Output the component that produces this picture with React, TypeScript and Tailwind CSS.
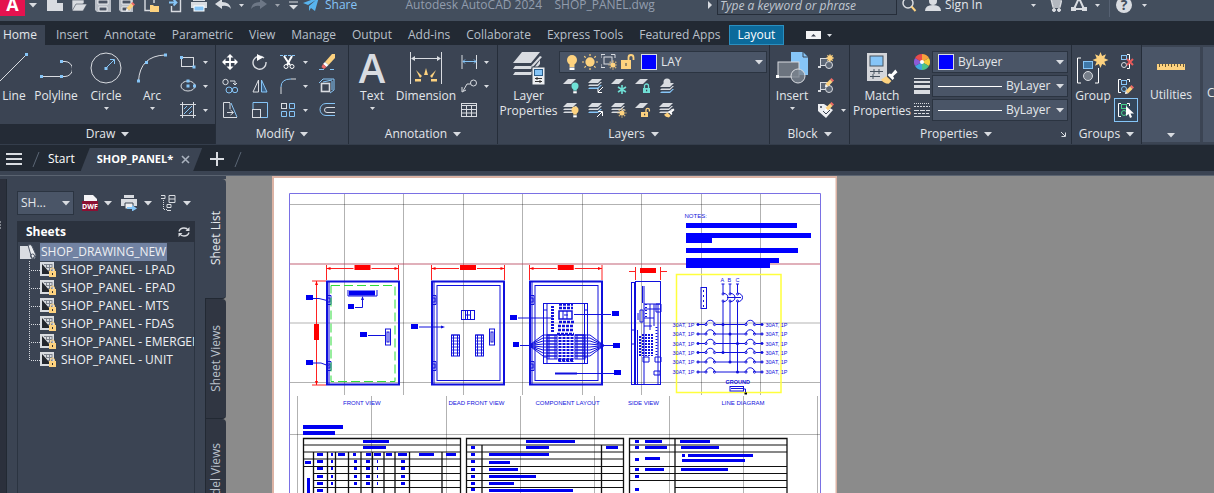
import React from 'react';
import type { ReactNode } from 'react';

const LIGHT = '#d9dce1';
const SKY = '#86c5f7';
const SAND = '#fdd27f';
const TEAL = '#6fe0d6';

function Svg({ w = 16, h = 16, children }: { w?: number; h?: number; children: ReactNode }) {
  return (
    <svg width={w} height={h} viewBox={`0 0 ${w} ${h}`} fill="none" stroke={LIGHT} className="shrink-0" aria-hidden="true">
      {children}
    </svg>
  );
}

function Caret({ big = false }: { big?: boolean }) {
  return big ? (
    <svg width="8" height="5" viewBox="0 0 8 5" className="pointer-events-none shrink-0" aria-hidden="true"><path d="M0 0h8L4 4.6z" fill={LIGHT} /></svg>
  ) : (
    <svg width="5" height="3" viewBox="0 0 5 3" className="shrink-0" aria-hidden="true"><path d="M0 0h5L2.5 3z" fill={LIGHT} /></svg>
  );
}

/* ---------- shared icon pieces ---------- */

const Sheets = ({ x = 0, y = 0, blue = false }: { x?: number; y?: number; blue?: boolean }) => (
  <g transform={`translate(${x} ${y})`} stroke="none">
    <path d="M4 0h10l-4 4H0z" fill={LIGHT} />
    <path d="M1.5 5.5L0 7h10l4-4h-1.5L9.8 5.6z" fill={LIGHT} />
    <path d="M1.5 8.5L0 10h10l4-4h-1.5L9.8 8.6z" fill={blue ? SKY : LIGHT} />
  </g>
);
const OneSheet = () => <path d="M5 1h8L8 6H0z" fill={LIGHT} stroke="none" />;
const Bulb = ({ x, y, r, c }: { x: number; y: number; r: number; c: string }) => (
  <g stroke="none">
    <circle cx={x} cy={y} r={r} fill={c} />
    <rect x={x - r / 2} y={y + r - 1} width={r} height={r * 0.6} fill={c} />
    <rect x={x - r / 2} y={y + r * 1.5} width={r} height={r * 0.6} fill="#fff" />
  </g>
);
const Sun = ({ x, y, r }: { x: number; y: number; r: number }) => (
  <g transform={`translate(${x} ${y})`}>
    <circle r={r * 0.58} fill={SAND} stroke="none" />
    <path d={`M0 ${-r}V${r}M${-r} 0H${r}M${-r * 0.72} ${-r * 0.72}L${r * 0.72} ${r * 0.72}M${r * 0.72} ${-r * 0.72}L${-r * 0.72} ${r * 0.72}`} stroke={SAND} strokeDasharray={`${r * 0.25} ${r * 1.5}`} strokeWidth="1.2" />
  </g>
);
const Pencil = ({ x = 0, y = 0 }: { x?: number; y?: number }) => (
  <g transform={`translate(${x} ${y})`} stroke="none">
    <path d="M6.5 0l2.5 2.5L7.5 4 5 1.5z" fill="#ee6a66" />
    <path d="M5 1.5L7.5 4 3 8.5.5 6z" fill={SAND} />
    <path d="M.5 6L3 8.5 0 9z" fill="#fff" />
  </g>
);
const Lock = ({ x, y, c, open = false }: { x: number; y: number; c: string; open?: boolean }) => (
  <g transform={`translate(${x} ${y})`}>
    <rect y="4" width="7" height="5" fill={c} stroke="none" />
    <path d={open ? 'M5 4V2a1.7 1.7 0 013.4 0v1.5' : 'M1.5 4V2a2 2 0 014 0v2'} stroke={c} strokeWidth="1.3" />
    <rect x="3" y="5.7" width="1.2" height="1.6" fill="#39414f" stroke="none" />
  </g>
);
const Star = ({ x, y, r }: { x: number; y: number; r: number }) => (
  <path transform={`translate(${x} ${y}) scale(${r / 8})`} stroke="none" fill={SAND}
    d="M0-8l1.6 4.1 3.9-1.8-1.7 4L8 0 3.8 1.7l1.7 4-3.9-1.8L0 8l-1.6-4.1-3.9 1.8 1.7-4L-8 0l4.2-1.7-1.7-4 3.9 1.8z" />
);
const Nodes = ({ pts, c = SKY }: { pts: number[][]; c?: string }) => (
  <>{pts.map(([x, y], i) => <rect key={i} x={x - 1.5} y={y - 1.5} width="3" height="3" fill={c} stroke="none" />)}</>
);
const Brush = ({ x, y, s = 1 }: { x: number; y: number; s?: number }) => (
  <g transform={`translate(${x} ${y}) scale(${s})`} stroke="none">
    <path d="M5 6.5L9.5 11 7 13.5Q2 13 0 9.500z" fill={SAND} />
    <path d="M6 5.500L10.500 10l1.500-1.500-1-2L15 3l-2-2.500-3.500 4-2-.5z" fill="#fff" />
  </g>
);

/* ---------- controls ---------- */

function Big({ icon, label, arrow, w }: { icon: ReactNode; label: string; arrow?: boolean; w: string }) {
  return (
    <button type="button" className={`flex shrink-0 flex-col items-center ${w}`}>
      <span className="flex h-9 items-center">{icon}</span>
      <span className="mt-0.5 text-center leading-[15px]">{label}</span>
      {arrow && <span className="mt-1"><Caret /></span>}
    </button>
  );
}

function Small({ icon, name, arrow, on }: { icon: ReactNode; name: string; arrow?: boolean; on?: boolean }) {
  return (
    <button type="button" aria-label={name} className={`flex h-6 items-center gap-[7px] px-1 ${on ? 'bg-[#33465a] outline-1 -outline-offset-1 outline-[#86c5f7]' : ''}`}>
      {icon}
      {arrow && <Caret />}
    </button>
  );
}

function Panel({ title, w, children, dark, launcher }: { title: string; w: string; children: ReactNode; dark?: boolean; launcher?: boolean }) {
  return (
    <section className={`flex shrink-0 flex-col border-r border-[#252d39] ${w}`}>
      <div className="flex flex-1 overflow-hidden pt-[5px]">{children}</div>
      <button type="button" className={`flex h-5 w-full items-center justify-center gap-1.5 ${dark ? 'bg-[#242b36]' : ''}`}>
        <span className={launcher ? 'flex flex-1 items-center justify-center gap-1.5 pl-2' : 'flex items-center gap-1.5'}>
          {title} <Caret big />
        </span>
        {launcher && <Svg w={11} h={8}><path d="M1 2l4 4M5.500 2.500V6.500H1.500" /></Svg>}
      </button>
    </section>
  );
}

function Combo({ label, value, lead }: { label: string; value: string; lead?: ReactNode }) {
  return (
    <label className="flex h-[22px] items-center gap-1 border border-[#2b3441] bg-[#4a5567] pr-[3px] pl-[5px]">
      {lead}
      <select aria-label={label} className="min-w-0 flex-1 appearance-none bg-transparent text-xs outline-none"><option>{value}</option></select>
      <Caret big />
    </label>
  );
}

const Swatch = () => <span className="size-4 shrink-0 border border-[#d9dce1] bg-[#0000ff]" />;

/* ---------- title bar ---------- */

function TitleBar() {
  const cell = 'flex w-6 shrink-0 justify-center';
  const arrow = 'flex w-3 shrink-0 justify-center';
  return (
    <header className="flex h-[21px] items-end overflow-hidden bg-[#434e5d]">
      <div className="flex h-8 w-full shrink-0 items-center">
        <button type="button" aria-label="Application menu" className="flex h-[27px] w-[25px] shrink-0 items-end justify-center self-start bg-[#e4124f] pb-0.5">
          <span className="text-lg leading-5 font-bold text-white">A</span>
        </button>
        <span className="flex w-[18px] shrink-0 pl-1"><Caret big /></span>
        <button type="button" aria-label="New" className={cell}><Svg><path d="M0 0h10v6h6v8H0z" fill={LIGHT} stroke="none" /></Svg></button>
        <button type="button" aria-label="Open" className={cell}><Svg><path d="M1 13V3h12v3M1 14L5 7h11l-4 7z" fill={LIGHT} stroke="#434e5d" strokeWidth=".6" /></Svg></button>
        <button type="button" aria-label="Save" className={cell}><Svg><path d="M0 0h16v15H2l-2-2z" fill="#b9bec6" stroke="none" /><path d="M3 3h10v4H3zM4 10h8v4H4z" fill="#4a5363" stroke="#eceef1" /></Svg></button>
        <button type="button" aria-label="Save as" className={cell}><Svg><path d="M0 0h14v15H2l-2-2z" fill="#b9bec6" stroke="none" /><path d="M3 3h9v4H3zM3 10h8v4H3z" fill="#4a5363" stroke="#eceef1" /><Pencil x={7} y={5} /></Svg></button>
        <button type="button" aria-label="Open from web" className={cell}><Svg><path d="M2 0v13.500h6M2 .5h9V6" strokeWidth="1.4" /><path d="M7 8h3l1 1h5v6H7z" fill={SAND} stroke="none" /></Svg></button>
        <button type="button" aria-label="Save to web" className={cell}><Svg><path d="M4.500 9v5.500h9V0" strokeWidth="1.4" /><path d="M2 5.500h7M6.500 2.500l3 3-3 3" stroke={SKY} strokeWidth="1.8" /></Svg></button>
        <button type="button" aria-label="Plot" className={cell}><Svg><path d="M2 0h12v4H2zM0 5h16v6H0z" fill={LIGHT} stroke="none" /><rect x="3" y="9" width="10" height="5" fill={SKY} stroke="#fff" /></Svg></button>
        <button type="button" aria-label="Undo" className={cell}><Svg><path d="M0 7l7-5v3q8 0 9 7-3-4-9-3v3z" fill={LIGHT} stroke="none" /></Svg></button>
        <span className={arrow}><Caret /></span>
        <button type="button" aria-label="Redo" className={cell}><Svg><path d="M16 7L9 2v3q-8 0-9 7 3-4 9-3v3z" fill="#6d7786" stroke="none" /></Svg></button>
        <span className={`${arrow} opacity-60`}><Caret /></span>
        <button type="button" aria-label="Customize" className="flex w-5 shrink-0 justify-center"><Svg w={9} h={10}><path d="M0 2h9" /><path d="M0 5h9L4.500 9.500z" fill={LIGHT} stroke="none" /></Svg></button>
        <button type="button" className="flex shrink-0 items-center gap-1.5 text-[#86c5f7]">
          <Svg><path d="M0 6L16 0 12 14 8 11 6 14V9l7-6-8 5z" fill="#58b4ee" stroke="none" /></Svg>Share
        </button>
        <p className="flex-1 text-center whitespace-pre text-[#929dad]">Autodesk AutoCAD 2024    SHOP_PANEL.dwg</p>
        <span className="flex w-3.5 shrink-0 justify-center"><svg width="4" height="8" viewBox="0 0 4 8" aria-hidden="true"><path d="M0 0l4 4-4 4z" fill={LIGHT} /></svg></span>
        <input aria-label="Search" placeholder="Type a keyword or phrase" className="h-5 w-[180px] shrink-0 border border-[#262e3a] bg-[#434e5d] px-0.5 italic outline-none placeholder:text-[#c0c7d0]" />
        <button type="button" aria-label="Find" className={cell}><Svg><circle cx="7" cy="6" r="5" strokeWidth="1.500" /><path d="M10.500 9.500l4 4.500" stroke={SAND} strokeWidth="2" /></Svg></button>
        <button type="button" className="flex w-[106px] shrink-0 items-center gap-1 pl-1">
          <Svg><path d="M0 14q0-6 8-6t8 6z" fill={LIGHT} stroke="none" /><circle cx="8" cy="4" r="4" fill={LIGHT} stroke="none" /></Svg>Sign In
        </button>
        <span className={arrow}><Caret /></span>
        <button type="button" aria-label="Store" className="ml-1 flex w-6 shrink-0 justify-center"><Svg w={14} h={14}><path d="M0 1h3l2 8h7l1.500-6H4M4 5h9M5 7h7" strokeWidth="1.300" /><circle cx="6" cy="12" r="1.500" fill={LIGHT} /><circle cx="11" cy="12" r="1.500" fill={LIGHT} /></Svg></button>
        <button type="button" aria-label="Autodesk apps" className={cell}><Svg><path d="M8 1L3 12M8 1l5 11M3 12h9" strokeWidth="2" /><path d="M0 10h5v4H0zM11 10h5v4h-5z" fill={LIGHT} stroke="none" /></Svg></button>
        <span className={arrow}><Caret /></span>
        <span className="mx-1.5 h-6 w-px shrink-0 bg-[#566172]" />
        <button type="button" aria-label="Help" className="flex size-4 shrink-0 items-center justify-center rounded-full bg-[#d9dce1] text-sm leading-4 font-bold text-[#434e5d]">?</button>
        <span className="flex w-[82px] shrink-0 pl-2.5"><Caret /></span>
      </div>
    </header>
  );
}

/* ---------- ribbon ---------- */

const TABS = ['Insert', 'Annotate', 'Parametric', 'View', 'Manage', 'Output', 'Add-ins', 'Collaborate', 'Express Tools', 'Featured Apps'];

function RibbonTabs() {
  return (
    <nav className="flex h-6 items-end bg-[#222933] text-[#b9c0ca]">
      <button type="button" className="mr-[3px] flex h-5 shrink-0 items-center bg-[#3b4453] pr-2 pl-[3px] text-[#e4e7eb]">Home</button>
      {TABS.map((t) => <button type="button" key={t} className="h-5 shrink-0 px-2">{t}</button>)}
      <button type="button" className="h-5 shrink-0 border border-[#2a8fc0] bg-[#0c6a9b] px-2 text-white">Layout</button>
      <button type="button" aria-label="Minimize ribbon" className="ml-[22px] flex h-5 items-center gap-1.5">
        <Svg w={15} h={8}><rect width="15" height="8" fill="#f2f3f5" stroke="none" /><path d="M5 5.500h5L7.500 3z" fill="#39414f" stroke="none" /></Svg>
        <Caret />
      </button>
    </nav>
  );
}

function DrawPanel() {
  return (
    <Panel title="Draw" w="w-[216px]" dark>
      <Big w="w-7" label="Line" icon={<Svg w={28} h={32}><path d="M0 29L26 3" /><Nodes pts={[[26.5, 2.5]]} /></Svg>} />
      <Big w="w-[56px]" label="Polyline" icon={<Svg w={32} h={32}><path d="M2 24.500H21.500M22 9.500h3a7.500 7.500 0 010 15h-3" /><Nodes pts={[[1.5, 24.5], [21.5, 9.5], [21.5, 24.5]]} /></Svg>} />
      <Big w="w-11" arrow label="Circle" icon={<Svg w={32} h={32}><circle cx="16" cy="16" r="15" /><path d="M17 15l7-7M20 7.500h4.500V12" stroke={SKY} /><Nodes pts={[[16, 16.5]]} /></Svg>} />
      <Big w="w-12" arrow label="Arc" icon={<Svg w={32} h={32}><path d="M2.500 29Q4 4 29 3" /><Nodes pts={[[2.5, 29], [10.5, 10.5], [29.5, 3]]} /></Svg>} />
      <div className="flex flex-col">
        <Small name="Rectangle" arrow icon={<Svg><rect x="1.500" y="3.500" width="12" height="9" /><Nodes pts={[[1.5, 3.5], [14, 13]]} /></Svg>} />
        <Small name="Ellipse" arrow icon={<Svg><ellipse cx="8" cy="8" rx="7" ry="5" /><Nodes pts={[[8, 3], [8, 8], [14.5, 8]]} /></Svg>} />
        <Small name="Hatch" arrow icon={<Svg><path d="M0 2.500h16M0 13.500h16M2.500 0v16M13.500 0v16" /><path d="M4 7l3-3M4 12l8-8M9 12l3-3" stroke={SKY} /></Svg>} />
      </div>
    </Panel>
  );
}

function ModifyPanel() {
  const col = 'flex flex-col';
  return (
    <Panel title="Modify" w="w-[133px]">
      <div className={`${col} pl-0.5`}>
        <Small name="Move" icon={<Svg><path d="M8 2v12M2 8h12" stroke="#fff" strokeWidth="1.800" /><path d="M8 0l3.500 3.500h-7zM8 16l3.500-3.500h-7zM0 8l3.500-3.500v7zM16 8l-3.500-3.500v7z" fill="#fff" stroke="none" /></Svg>} />
        <Small name="Copy" icon={<Svg><circle cx="3.500" cy="4" r="2.700" /><path d="M8 3h5v4M11 5l2 2 2-2" /><circle cx="7" cy="12" r="3" stroke={SKY} /><circle cx="13" cy="12" r="2.700" stroke={SKY} /></Svg>} />
        <Small name="Stretch" icon={<Svg><path d="M8 .5H1.500v15H6M8 1v6M6 15.500h9M5 10.500h6M8.500 8l3 2.500-3 2.500" /><path d="M9 1l6 14" stroke={SKY} /></Svg>} />
      </div>
      <div className={`${col} pl-1.5`}>
        <Small name="Rotate" icon={<Svg><path d="M12 4a6.500 6.500 0 10 2 4" strokeWidth="1.400" /><path d="M5 0l6 3.500L5 7z" fill="#fff" stroke="none" /></Svg>} />
        <Small name="Mirror" icon={<Svg><path d="M6.500 2v12H1z" /><path d="M9.500 2v12H15z" stroke={SKY} fill="#3c6288" /></Svg>} />
        <Small name="Scale" icon={<Svg><path d="M1 7V.5h14.500v15H9" stroke={SKY} /><rect x=".5" y="7.500" width="8" height="8" /></Svg>} />
      </div>
      <div className={`${col} pl-1`}>
        <Small name="Trim" arrow icon={<Svg><path d="M0 1.500h16" stroke={SKY} strokeDasharray="3 1" /><path d="M4 2l6 9M12 2L7 11" stroke="#fff" strokeWidth="2" /><circle cx="6" cy="12.500" r="2" stroke="#fff" /><circle cx="12" cy="12.500" r="2" stroke="#fff" /></Svg>} />
        <Small name="Fillet" arrow icon={<Svg><path d="M1 9v7M11 1h5" /><path d="M1 9Q1 1 11 1" stroke={SKY} /></Svg>} />
        <Small name="Array" arrow icon={<Svg><rect x="1.500" y="1.500" width="5" height="5" /><path d="M9.500 1.500h5v5h-5zM1.500 9.500h5v5h-5zM9.500 9.500h5v5h-5z" stroke={SKY} /></Svg>} />
      </div>
      <div className={`${col} pl-[3px]`}>
        <Small name="Erase" icon={<Svg><path d="M0 15.500h5M11 15.500h4" stroke={SKY} /><path d="M16 0v4L9.500 11 6 8l7-8z" fill={SAND} stroke="none" /><path d="M6 8l3.500 3-2 2L4 10z" fill="#fff" stroke="none" /><path d="M4 10l3.500 3L5 15l-2.500-2z" fill="#ee6a66" stroke="none" /></Svg>} />
        <Small name="Explode" icon={<Svg><rect x="2.500" y="5.500" width="8" height="8" strokeWidth="1.600" /><path d="M0 5l4-4h11v11l-4 3M4 4l9-2M13 3v9" stroke={SKY} /></Svg>} />
        <Small name="Offset" icon={<Svg><path d="M16 1.500H7a6 6 0 000 12h9" stroke={SKY} /><path d="M16 5.500H8a2.500 2.500 0 000 5h8" /></Svg>} />
      </div>
    </Panel>
  );
}

function AnnotationPanel() {
  return (
    <Panel title="Annotation" w="w-[149px]">
      <Big w="w-[46px]" arrow label="Text" icon={<span className="text-[40px] leading-9 font-semibold text-[#d9dce1]">A</span>} />
      <Big w="w-[62px]" label="Dimension" icon={<Svg w={32} h={34}><path d="M.5 1v32M31.500 1v32M2 7.500h28" /><path d="M1 7.500l4-2.500v5zM31 7.500L27 5v5z" fill={LIGHT} stroke="none" /><path d="M16 17l2 7h-4zM6 19l6 6-2 2zM26 19l-6 6 2 2zM5 28h6v2.500H5zM21 28h6v2.500h-6z" fill={SAND} stroke="none" /></Svg>} />
      <div className="flex flex-col">
        <Small name="Linear" arrow icon={<Svg><path d="M1 1v14M15.500 1v14" /><path d="M2 7.500h13M4 5.500l-2 2 2 2M13 5.500l2 2-2 2" stroke={SKY} /></Svg>} />
        <Small name="Leader" arrow icon={<Svg><circle cx="12.500" cy="5" r="3" /><path d="M9.500 6H6l-4 7M1 9v5l4-2" /></Svg>} />
        <Small name="Table" icon={<Svg><rect x=".5" y="1.500" width="15" height="13" /><path d="M0 3.500h16M0 7.500h16M0 11h16M5.500 4v10M10.500 4v10" /></Svg>} />
      </div>
    </Panel>
  );
}

function LayersPanel() {
  return (
    <Panel title="Layers" w="w-[272px]">
      <Big w="w-[61px]" label="Layer Properties" icon={
        <Svg w={34} h={34}>
          <path d="M10 1h18L19 12H1zM3 15l-2 3h18L30 6l-2-1-9 10zM3 21l-2 3h18l9-11V9l-9 12z" fill={LIGHT} stroke="none" />
          <rect x="20" y="16" width="13" height="18" fill="#eceef1" stroke="#3b4453" /><rect x="22.500" y="18.500" width="8" height="6" fill={SKY} stroke="#2b5f8c" /><path d="M23 27.500h7M23 30.500h7M25 26v3M28 29v3" stroke="#333" />
        </Svg>} />
      <div className="flex flex-1 flex-col pr-0.5">
        <div className="flex h-6 flex-col justify-center">
          <Combo label="Layer" value="LAY" lead={
            <span className="flex items-center gap-[3px]">
              <Svg w={14} h={16}><Bulb x={7} y={6} r={5} c={SAND} /></Svg>
              <Svg><Sun x={8} y={8} r={8} /></Svg>
              <Svg><path d="M0 4V.5h4M10 .5h4V4M0 10v3.500h4" /><rect x="3" y="3" width="8" height="7" /><Sun x={12} y={11} r={4.5} /></Svg>
              <Svg><rect x="1" y="6" width="10" height="9" fill={SAND} stroke="none" /><path d="M8.500 6V3.500a2.500 2.500 0 015 0V6" stroke={SAND} strokeWidth="1.800" /><path d="M6 9v3" stroke="#39414f" /></Svg>
              <span className="flex pl-0.5"><Swatch /></span>
            </span>} />
        </div>
        <div className="flex">
          <Small name="Layer off" icon={<Svg><OneSheet /><Bulb x={12} y={8} r={3.5} c={TEAL} /></Svg>} />
          <Small name="Isolate" icon={<Svg><Sheets x={1} y={1} blue /><path d="M16 9l-5 5M11 10.500V14.500h4" stroke="#fff" /></Svg>} />
          <Small name="Freeze" icon={<Svg><OneSheet /><path d="M11 7v9M7 9l8 5M15 9l-8 5" stroke={TEAL} strokeWidth="1.600" /></Svg>} />
          <Small name="Lock layer" icon={<Svg><OneSheet /><Lock x={8} y={6} c={TEAL} /></Svg>} />
          <Small name="Make current" icon={<Svg><Sheets x={1} y={5} blue /><circle cx="8" cy="4" r="3.500" fill={LIGHT} stroke="none" /></Svg>} />
        </div>
        <div className="flex">
          <Small name="Turn all on" icon={<Svg><Sheets y={1} /><Bulb x={12} y={8} r={3.5} c={SAND} /></Svg>} />
          <Small name="Unisolate" icon={<Svg><Sheets x={1} y={1} blue /><path d="M10 15l5-5M11 9.500h4.500V14" stroke="#fff" /></Svg>} />
          <Small name="Thaw all" icon={<Svg><Sheets y={1} /><Sun x={11} y={11} r={4.5} /></Svg>} />
          <Small name="Unlock layer" icon={<Svg><OneSheet /><Lock x={6} y={6} c={SAND} open /></Svg>} />
          <Small name="Match layer" icon={<Svg><Sheets y={1} /><Brush x={5} y={6} s={0.7} /></Svg>} />
        </div>
      </div>
    </Panel>
  );
}

function BlockPanel() {
  const blk = <><rect x="2.500" y="4.500" width="9" height="7" fill="#5c6675" /><circle cx="11" cy="11" r="3.500" fill="#5c6675" /><path d="M0 12h3v2H0z" fill={LIGHT} stroke="none" /></>;
  return (
    <Panel title="Block" w="w-20">
      <Big w="w-[44px]" arrow label="Insert" icon={
        <Svg w={33} h={34}><path d="M15 1h12l5 5v18H15z" fill={SKY} stroke="none" /><path d="M27 1v5h5" stroke="#3b4453" /><rect x="2" y="11" width="21" height="15" fill="#6c747f" /><circle cx="22" cy="25" r="7" fill="#7b838e" fillOpacity=".8" /><path d="M0 24h3v3H0z" fill="#fff" stroke="none" /></Svg>} />
      <div className="flex flex-col">
        <Small name="Create block" icon={<Svg>{blk}<Star x={12} y={4} r={4.5} /></Svg>} />
        <Small name="Edit block" icon={<Svg>{blk}<Pencil x={7} y={0} /></Svg>} />
        <Small name="Edit attributes" arrow icon={<Svg><path d="M0 2h6l9 6-7 8L0 9z" fill="#eceef1" stroke="none" /><circle cx="3" cy="5" r="1" fill="#39414f" stroke="none" /><path d="M5 9l3 3 4-4" stroke="#39414f" /><Pencil x={7} y={0} /></Svg>} />
      </div>
    </Panel>
  );
}

function PropertiesPanel() {
  const rule = <span className="h-px w-16 shrink-0 bg-white" />;
  const wheel = ['#f7a13c', '#f4d03f', '#4cc38a', '#3fa7e0', '#8d5bd6', '#e94b4b'];
  const row = 'flex h-6 items-center gap-0.5';
  return (
    <Panel title="Properties" w="w-[222px]" launcher>
      <Big w="w-[64px]" label="Match Properties" icon={
        <Svg w={32} h={34}><rect x="1" y="2" width="20" height="28" fill="#d4d6da" stroke="none" /><rect x="4" y="5" width="13" height="10" fill={SKY} stroke="#46525f" /><path d="M4 20.500h13M4 25.500h10M8 18v5M13 18v5M7 23v5" stroke="#46525f" /><Brush x={15} y={18} s={1.1} /></Svg>} />
      <div className="flex min-w-0 flex-1 flex-col pr-[3px]">
        <div className={row}>
          <Svg>{wheel.map((c, i) => <path key={c} d="M8 8L8 0A8 8 0 0114.930 4z" fill={c} stroke="none" transform={`rotate(${i * 60} 8 8)`} />)}<circle cx="8" cy="8" r="2" fill="#fff" stroke="none" /></Svg>
          <div className="min-w-0 flex-1"><Combo label="Object color" value="ByLayer" lead={<Swatch />} /></div>
        </div>
        <div className={row}>
          <Svg><path d="M0 .5h16" /><path d="M0 4h16" strokeWidth="2" /><path d="M0 8.500h16" strokeWidth="3" /><path d="M0 14h16" strokeWidth="4" /></Svg>
          <div className="min-w-0 flex-1"><Combo label="Lineweight" value="ByLayer" lead={rule} /></div>
        </div>
        <div className={row}>
          <Svg><path d="M0 1.500h16" strokeDasharray="1 1" /><path d="M0 4.500h16" strokeDasharray="2 1" /><path d="M0 8.500h16" strokeDasharray="5 1" /><path d="M0 11.500h16" strokeDasharray="3 1" /><path d="M0 14.500h16" /></Svg>
          <div className="min-w-0 flex-1"><Combo label="Linetype" value="ByLayer" lead={rule} /></div>
        </div>
      </div>
    </Panel>
  );
}

function GroupsPanel() {
  const grp = (c: string) => <><path d="M3 1.500H.5v13H3M9 1.500h2.500V4" stroke="#fff" /><rect x="3.500" y="2.500" width="5" height="4" stroke={c} /><circle cx="6" cy="11" r="2.500" stroke={c} /></>;
  return (
    <Panel title="Groups" w="w-[70px]">
      <Big w="w-[42px]" label="Group" icon={
        <Svg w={32} h={34}><path d="M4 7H.5v25H4M18 32h3.500V17" stroke="#fff" /><rect x="6.500" y="10.500" width="9" height="7" fill="#3f78a8" stroke={SKY} /><circle cx="11" cy="25" r="4.500" fill="#767e89" /><Star x={23.5} y={9} r={8} /></Svg>} />
      <div className="flex flex-col">
        <Small name="Ungroup" icon={<Svg><rect x="3.500" y="1.500" width="5" height="4" stroke={SKY} /><circle cx="6" cy="11" r="2.500" /><path d="M9 .5h2.500v14H9" stroke="#fff" /><path d="M9 5l6 6M15 5l-6 6" stroke="#e85a5a" strokeWidth="2" /></Svg>} />
        <Small name="Group edit" icon={<Svg>{grp(SKY)}<Pencil x={7} y={7} /></Svg>} />
        <Small name="Group selection" on icon={<Svg>{grp('#45d08a')}<path d="M8 4v10l2.500-2 1.500 4 2-1-1.500-3.500H16z" fill="#fff" stroke="none" /></Svg>} />
      </div>
    </Panel>
  );
}

function Ribbon() {
  const tall = 'mt-0.5 mb-0.5 flex shrink-0 flex-col items-center bg-[#4a5567] pb-1';
  return (
    <div className="flex h-[99px] overflow-hidden bg-[#3b4453] text-[#e4e7eb]">
      <DrawPanel />
      <ModifyPanel />
      <AnnotationPanel />
      <LayersPanel />
      <BlockPanel />
      <PropertiesPanel />
      <GroupsPanel />
      <button type="button" className={`${tall} w-[58px]`}>
        <Svg w={28} h={34}><path d="M0 17h28v6H0z" fill={SAND} stroke="none" /><path d="M2.500 17v3M5.500 17v2M8.500 17v3M11.500 17v2M14.500 17v3M17.500 17v2M20.500 17v3M23.500 17v2M26.500 17v3" stroke="#6b5a35" /></Svg>
        <span className="mt-1.5">Utilities</span>
        <span className="mt-auto"><Caret big /></span>
      </button>
      <button type="button" className="mt-0.5 mb-0.5 ml-[3px] flex flex-1 items-start bg-[#4a5567] pt-[38px] pl-1">C</button>
    </div>
  );
}

/* ---------- document tabs ---------- */

function DocTabs() {
  const slash = <Svg w={8} h={16}><path d="M1 16L7 1" stroke="#5b6675" /></Svg>;
  return (
    <nav className="mt-px flex h-[30px] items-center border-b-4 border-[#3b4453] bg-[#222933] pt-0.5 text-[11px] text-white">
      <button type="button" aria-label="Menu" className="ml-1.5 shrink-0"><Svg><path d="M0 3h16M0 8h16M0 13h16" strokeWidth="2" /></Svg></button>
      <span className="ml-2.5">{slash}</span>
      <button type="button" className="ml-2 shrink-0 text-xs">Start</button>
      <div className="ml-1.5 flex h-[23px] shrink-0 items-center gap-2 self-end bg-[#3b4453] pr-2 pl-4 [clip-path:polygon(9px_0,100%_0,calc(100%-9px)_100%,0_100%)]">
        <button type="button" className="font-bold">SHOP_PANEL*</button>
        <button type="button" aria-label="Close" className="pr-1"><Svg w={9} h={9}><path d="M1 1l7 7M8 1L1 8" stroke="#a9b1bd" strokeWidth="1.600" /></Svg></button>
      </div>
      <button type="button" aria-label="New tab" className="ml-2 shrink-0"><Svg w={14} h={14}><path d="M7 0v14M0 7h14" strokeWidth="2" /></Svg></button>
      <span className="ml-2.5">{slash}</span>
    </nav>
  );
}

/* ---------- sheet set palette ---------- */

const SHEETS = ['LPAD', 'EPAD', 'MTS', 'FDAS', 'EMERGEN', 'UNIT'];

function SheetSet() {
  return (
    <aside className="flex shrink-0">
      <div className="flex w-[7px] shrink-0 border-r border-[#222933] bg-[#2b303c] pt-[42px]">
        <Svg w={2} h={9}><path d="M0 1h1M0 4h1M0 7h1" /></Svg>
      </div>
      <div className="w-[198px] shrink-0 bg-[#3b4453] pt-3 pr-2.5 pl-2.5">
        <div className="flex items-center">
          <label className="mr-2 flex h-6 w-[57px] items-center gap-1 border border-[#2b3441] bg-[#4a5567] pr-[3px] pl-[3px] text-[#e4e7eb]">
            <select aria-label="Sheet set" className="w-full min-w-0 appearance-none bg-transparent text-xs outline-none"><option>SH...</option></select>
            <Caret big />
          </label>
          <button type="button" aria-label="Publish to DWF" className="flex w-[39px] items-center gap-1.5"><Svg><path d="M2 0h9l4 4v4H2z" fill="#f4f4f6" stroke="none" /><path d="M0 6h16v10H0z" fill="#8c1033" stroke="none" /><text x="8" y="14" textAnchor="middle" fontSize="7" fontWeight="700" fill="#fff" stroke="none">DWF</text></Svg><Caret big /></button>
          <button type="button" aria-label="Publish" className="flex w-[40px] items-center gap-1.5"><Svg w={17} h={16}><path d="M3 0h10v3H3zM0 4h16v7H0z" fill={LIGHT} stroke="none" /><path d="M4 8h8v6H4z" fill="#eceef1" stroke="#3b4453" /><path d="M6 12h5v-2l5 3.500-5 3V14H6z" fill={SKY} stroke="none" /></Svg><Caret big /></button>
          <button type="button" aria-label="Sheet selections" className="flex items-center gap-1.5"><Svg><path d="M2.500 3v12M3 14.500h3" strokeDasharray="1 1" /><path d="M0 .5h4v3H0M8 .5h6v7H8zM6 9.500h4v3H6zM8 4h6M6 15.500h4" /></Svg><Caret big /></button>
        </div>
        <div className="mt-1.5 flex h-[21px] items-center justify-between bg-[#2b323e] pr-[5px] pl-[9px]">
          <h2 className="text-xs font-bold text-white">Sheets</h2>
          <button type="button" aria-label="Refresh"><Svg w={12} h={10}><path d="M1 4.500Q2 1 6 1q3 0 4 2M11 5.500Q10 9 6 9 3 9 2 7" strokeWidth="1.300" /><path d="M11.500 0v4h-4zM.500 10V6h4z" fill={LIGHT} stroke="none" /></Svg></button>
        </div>
        <div className="h-full overflow-hidden border-x border-[#2b3441] text-xs whitespace-nowrap text-[#eef0f3]">
          <div className="flex h-[19px] items-end gap-[3px] pl-0.5">
            <Svg w={17} h={17}><path d="M0 2h9l6 13H0z" fill={LIGHT} stroke="none" /><path d="M8 1q3-1 4 1l4 9q0 4-4 4z" fill="#eceef1" stroke="#4a5363" /><circle cx="12.500" cy="12" r="2" stroke="#4a5363" /></Svg>
            <button type="button" className="h-[18px] bg-[#7283a3] px-px">SHOP_DRAWING_NEW</button>
          </div>
          <ul>
            {SHEETS.map((s) => (
              <li key={s} className="flex h-[18px] items-center pl-[11px]">
                <Svg w={11} h={18}><path d={s === 'UNIT' ? 'M.5 0v9' : 'M.5 0v18'} strokeDasharray="1 1" /><path d="M2 9.500h9" strokeDasharray="1 1" /></Svg>
                <Svg><rect width="14" height="14" fill={LIGHT} stroke="none" /><path d="M2 2v10h9z" fill="#23272e" stroke="none" /><path d="M4 2.500h8M6 5.500h6M8 8.500h4M6.500 2v4M9.500 2v7M12 2v9" stroke="#7c828c" /><rect x="9" y="9" width="7" height="6" fill={SAND} stroke="none" /><path d="M10.500 9.500V8a2 2 0 014 0v1.500" stroke={SAND} /><path d="M12.500 11v2" stroke="#333" /></Svg>
                <span className="pl-[5px]">SHOP_PANEL - {s}</span>
              </li>
            ))}
          </ul>
        </div>
      </div>
      <div className="flex w-[21px] shrink-0 flex-col overflow-hidden">
        {['Sheet List', 'Sheet Views', 'Model Views'].map((t, i) => (
          <button type="button" key={t} className={`flex h-[120px] shrink-0 items-center justify-center rounded-r-sm border-b border-[#222933] text-xs ${i ? 'border-l bg-[#303642] text-[#b9c0ca]' : 'bg-[#3b4453] text-[#e4e7eb]'}`}>
            <span className="rotate-180 leading-4 [writing-mode:vertical-rl]">{t}</span>
          </button>
        ))}
      </div>
    </aside>
  );
}

/* ---------- drawing sheet ---------- */

const INK = '#1010dc';

const Bars = ({ at, h = 3, c = '#0000f0' }: { at: number[][]; h?: number; c?: string }) => (
  <g fill={c} stroke="none">{at.map(([x1, x2, y, hh], i) => <rect key={i} x={x1} y={y} width={x2 - x1} height={hh ?? h} />)}</g>
);

function TopDim({ x1, x2 }: { x1: number; x2: number }) {
  const m = (x1 + x2) / 2;
  return (
    <g stroke="#f22" fill="#f00">
      <path d={`M${x1} 265v15M${x2} 265v15M${x1} 268.500H${m - 9}M${m + 9} 268.500H${x2}`} />
      <path d={`M${x1} 268.500l4-1.500v3zM${x2} 268.500l-4-1.500v3z`} stroke="none" />
      <rect x={m - 8} y="265" width="16" height="5" stroke="none" />
    </g>
  );
}

function Enclosure({ x, inner }: { x: number; inner: boolean }) {
  return (
    <g>
      <rect x={x} y="281.500" width="72" height="103" strokeWidth="2" />
      {inner && <rect x={x + 5} y="285.500" width="63" height="95" />}
      <path d={`M${x + 2} 282v102M${x} 295.500h4v9h-4M${x + 1} 298h2v4h-2M${x} 361.500h4v9h-4M${x + 1} 364h2v4h-2`} />
    </g>
  );
}

function Breakers({ x, y, n, w }: { x: number; y: number; n: number; w: number }) {
  return (
    <g>
      <rect x={x} y={y} width={w} height={n * 3} />
      <path d={`M${x + 2} ${y}v${n * 3}M${x + w - 2} ${y}v${n * 3}`} />
      {Array.from({ length: n }, (_, i) => <path key={i} d={`M${x} ${y + i * 3}h${w}`} strokeWidth=".8" />)}
    </g>
  );
}

const ROWS = [324.5, 334, 343.5, 352.5, 362, 372];
const FAN = [335, 338, 341, 344, 347, 350, 353, 356];

function Drawing() {
  const t1 = [313.5, 327.5, 335.5, 348.5, 361, 372.5, 384, 395, 409.5, 442];
  const lines = [445, 452, 459, 466.5, 473.5, 480.5, 487.5];
  return (
    <svg width="565" height="317" viewBox="272 176 565 317" fill="none" stroke={INK} className="block bg-white" fontFamily="'Liberation Sans', sans-serif" role="img" aria-label="Panel shop drawing">
      <path d="M273 493V177H836.500V493" stroke="#dcb3a4" strokeWidth="2" />
      <g stroke="#000" strokeOpacity=".38" strokeWidth=".8">
        {[344.5, 403.5, 463.5, 522.5, 582.5, 641.5, 701.5, 760.5].map((x) => <path key={x} d={`M${x} 194V395`} />)}
        {[297.5, 371.5, 446.5, 520.5, 594.5, 669.5, 743.5, 817.5].map((x) => <path key={x} d={`M${x} 396V493`} />)}
        {[204.5, 323, 382.5, 434.5].map((y) => <path key={y} d={`M289 ${y}H820`} />)}
      </g>
      <path d="M289 264H820" stroke="#b33a52" strokeOpacity=".8" />
      <path d="M289.500 493V193.500H820.500V493" stroke="#7a70e4" />

      <Bars h={5} c="#0000ff" at={[[686, 797, 223], [686, 811, 233], [686, 712, 238], [686, 798, 248], [686, 779, 258], [686, 770, 263]]} />
      <TopDim x1={326.5} x2={398.5} />
      <TopDim x1={431.5} x2={504.5} />
      <TopDim x1={529.5} x2={602} />
      <g stroke="#f22"><path d="M316.500 281V385M312 281h14M312 385h14M635.500 267v13M660.500 267v13M629 271.500h7M660 271.500h7" /><path d="M314 324h5v16h-5zM640 268h16v5h-16zM315 285l1.500-4 1.500 4zM315 381l1.500 4 1.500-4z" fill="#f00" stroke="none" /></g>

      <g id="front">
        <Enclosure x={327} inner={false} />
        <rect x="331" y="285.500" width="64" height="96" stroke="#2fdc3c" strokeDasharray="9 4" />
        <path d="M348 290v6h29v-6M313 298.500h6l8 2M313 363h8l8 3M355 307.500h7.500V297M368 335.500h17" />
        <path d="M361 300l1.500-4 1.500 4z" fill={INK} stroke="none" />
        <rect x="385.500" y="329" width="5" height="16" /><rect x="387" y="332" width="2" height="10" />
        <Bars h={5} at={[[349, 375, 290.5], [306, 313, 295], [306, 313, 360], [348, 354, 304], [360, 367, 332]]} />
      </g>

      <g id="dead-front">
        <Enclosure x={432} inner />
        <rect x="461.500" y="310.500" width="13" height="9" /><path d="M465.500 311v9M470.500 311v9M466 315h4M467.500 311v9" />
        <Breakers x={451.5} y={335} n={7} w={8} />
        <Breakers x={475.5} y={335} n={7} w={8} />
        <rect x="489.500" y="329" width="5" height="16" /><rect x="491" y="332" width="2" height="10" />
        <path d="M419 327h24" /><path d="M441 325.500l4 1.500-4 1.500z" fill={INK} stroke="none" />
        <Bars h={5} at={[[411, 418, 324]]} />
      </g>

      <g id="components">
        <Enclosure x={530} inner />
        <rect x="543.500" y="303.500" width="44" height="60" />
        <path d="M547 304v59M584.500 304v59M543 310h4M584 310h4M543 357h4M584 357h4" />
        <path d="M552.500 306v26" strokeWidth="3" strokeDasharray="2 1" />
        <g strokeWidth="2.500" strokeDasharray="3 1"><path d="M559 304.500h14M559 308h14M559 322h15M558 326h16M558 330h15M557 334h17M558 360h16" /></g>
        <rect x="559" y="311" width="13" height="8" strokeWidth="1.500" /><path d="M563 311v8M567 311v8M564 315h4" />
        {FAN.map((y) => <path key={y} d={`M529 345.500L543 ${y}H557M604 345.500L590 ${y}H575`} />)}
        <path d="M560 334v28M564 334v28M568 334v28M572 334v28" strokeWidth="3" strokeDasharray="2 1" />
        <Breakers x={547} y={335} n={8} w={10} />
        <Breakers x={575} y={335} n={8} w={10} />
        <path d="M518 318h35M574 314.500h37M520 345.500h10M604 345.500h9M575 373.500h39" />
        <path d="M555 373.500h22" strokeWidth="2" />
        <Bars h={5} at={[[510, 517, 315], [612, 619, 311], [513, 519, 342], [613, 620, 343], [614, 621, 370]]} />
      </g>

      <g id="side">
        <rect x="631.500" y="282.500" width="3" height="102" /><rect x="635.500" y="281.500" width="25" height="103" />
        <path d="M637.500 330v54M642.500 286v17M644 286v98M640 310h3v12h-3zM638 313v7M632 330h3v14h-3" />
        <path d="M644 304h16M644 309h16M650 304v26M654 304v22M658 304v80M644 318h10M644 326h8" />
        <path d="M656 304h5v8h-5zM643 357h6v5h-6zM655 357h6v5h-6zM654 371h6v4h-6z" />
        <path d="M640 336v20M643 334v22M646 334v22M649 334v22M652 334v22" strokeWidth="2" strokeDasharray="2 1" />
        <path d="M656.500 327v30M646 304v14" strokeWidth="2" strokeDasharray="1 2" />
      </g>

      <g id="line-diagram">
        <rect x="676.500" y="274.500" width="104.500" height="118" stroke="#ffff3c" strokeWidth="1.500" />
        <rect x="701" y="287.500" width="5.500" height="21" /><path d="M703.500 290v17" strokeDasharray="2 3" />
        <path d="M723 284v9M730 284v9M737.500 284v9M723 302v50M730 302v60M737.500 302v70" />
        {[723, 730, 737.5].map((x) => (
          <g key={x}><path d={`M${x} 293q5 1 5 4.500T${x} 302M${x - 1.5} 284h3`} /><circle cx={x} cy="294" r="1" /><circle cx={x} cy="301" r="1" /></g>
        ))}
        <path d="M727 297.500h14" />
        {ROWS.map((y, i) => (
          <g key={y}>
            <path d={`M697 ${y}h8M716 ${y}h29M756 ${y}h7M706 ${y}a4 4 0 018.500 0M746 ${y}a4 4 0 018.500 0`} />
            {[698, 706, 714.5, 746, 754.5, 762].map((x) => <circle key={x} cx={x} cy={y} r="1.100" />)}
            <circle cx={[723, 730, 737.5][i % 3]} cy={y} r="1.500" fill={INK} stroke="none" />
            <g fill={INK} stroke="none" fontSize="5.500"><text x="672.500" y={y + 2}>30AT, 1P</text><text x="765.500" y={y + 2}>30AT, 1P</text></g>
          </g>
        ))}
        <rect x="730" y="386.500" width="13.500" height="4.500" /><path d="M731 388.500h12M744 389h1.500v3" /><path d="M744.500 392.500h2.500v2h-2.500z" fill="#000" stroke="none" />
      </g>

      <g fill={INK} stroke="none" fontSize="6">
        <text x="684.500" y="218">NOTES:</text>
        <g fontSize="5.500"><text x="720.500" y="282">A</text><text x="727.500" y="282">B</text><text x="735.500" y="282">C</text></g>
        <text x="725.500" y="384" fontSize="5.500" fontWeight="700">GROUND</text>
        <text x="343" y="405">FRONT VIEW</text>
        <text x="448.500" y="405">DEAD FRONT VIEW</text>
        <text x="535.500" y="405">COMPONENT LAYOUT</text>
        <text x="628" y="405">SIDE VIEW</text>
        <text x="721.500" y="405">LINE DIAGRAM</text>
      </g>

      <Bars h={4} at={[[303, 343, 425], [303, 335, 431]]} />
      <g stroke="#111">
        <path d="M303.500 493V438.500H460.500V493M466.500 493V438.500H623.500V493M629.500 493V438.500H787V493M675 438v55M482 445v48M601.500 445v48" strokeWidth="1.300" />
        {lines.map((y) => <path key={y} d={`M${y === 473.5 || y > 475 ? 313 : 303} ${y}H460M466 ${y}H623`} />)}
        {t1.map((x) => <path key={x} d={`M${x} 452V493`} strokeWidth="1.300" />)}
        <path d="M629 445H787M629 452H787M629 466.500H787M629 473.500H787M629 480.500H787M675 487.500H787" strokeWidth="1.200" />
      </g>
      <Bars at={[[363, 389, 440], [363, 386, 446], [317, 323, 453], [331, 333, 453], [338, 345, 453], [353, 356, 453], [366, 371, 453], [374, 381, 453], [386, 392, 453], [398, 407, 453], [419, 434, 453], [446, 456, 453], [305, 311, 461], [307, 310, 478, 15]]} />
      {[460, 467, 475, 482].map((y) => <Bars key={y} at={[[317, 323, y], [331, 333, y], [354, 357, y], [366, 370, y], [377, 378, y], [401, 405, y]]} />)}
      <Bars at={[[317, 323, 489], [526, 575, 440], [526, 549, 446], [489, 549, 453], [489, 510, 461], [489, 518, 468], [489, 536, 475], [489, 514, 482], [489, 573, 489], [606, 618, 446], ...[446, 453, 460, 468, 475, 482, 488].map((y) => [471, 475, y])]} />
      <Bars at={[...[440, 446, 458, 468, 475, 488].map((y) => [635, 639, y]), [645, 662, 440], [645, 667, 446], [645, 660, 457], [645, 664, 468], [680, 710, 440], [681, 719, 446], [682, 685, 454], [688, 753, 454], [682, 745, 459], [681, 728, 468]]} />
    </svg>
  );
}

export default function App() {
  return (
    <div className="flex h-screen flex-col overflow-hidden bg-[#343d4b] font-['Open_Sans','Noto_Sans',sans-serif] text-xs text-[#e4e7eb]">
      <TitleBar />
      <RibbonTabs />
      <Ribbon />
      <DocTabs />
      <main className="flex min-h-0 flex-1 items-stretch overflow-hidden border-t border-[#5a6370] bg-[#8b8b8b]">
        <div className="flex shrink-0 border-t-[3px] border-[#3b4453]"><SheetSet /></div>
        <div className="ml-[46px] overflow-hidden"><Drawing /></div>
      </main>
    </div>
  );
}
